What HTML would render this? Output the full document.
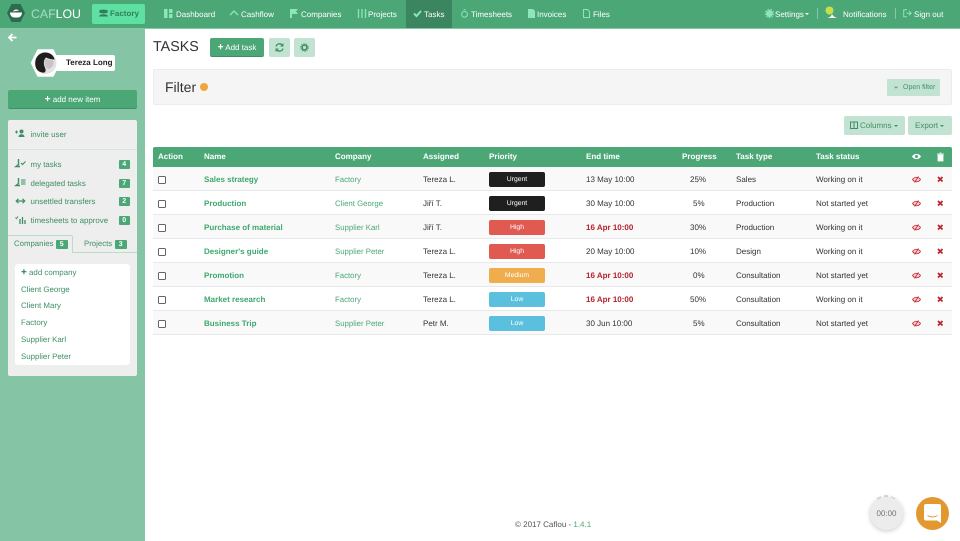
<!DOCTYPE html>
<html><head><meta charset="utf-8"><style>
html,body{margin:0;padding:0;width:960px;height:541px;overflow:hidden;background:#fff;font-family:"Liberation Sans",sans-serif;color:#333;text-rendering:geometricPrecision}
.a,.a *{box-sizing:border-box}
.a{position:absolute;white-space:nowrap}
svg{position:absolute;overflow:visible}
.n{color:#fff;font-size:8px;top:9px;line-height:11px}
.s{color:#3f8f66;font-size:7.9px;line-height:12px;left:30.500px;margin-top:1px}
.b{left:118.500px;width:11.500px;height:9.500px;margin-top:.7px;background:#4ca777;color:#fff;font-size:7px;font-weight:bold;text-align:center;line-height:9.500px;border-radius:1px}
.l{left:21px;color:#3f8f66;font-size:7.900px;line-height:12px}
.h{top:151px;color:#fff;font-size:8px;font-weight:bold;line-height:11px}
.r{left:153px;width:799px;height:24px;border-bottom:1px solid #e8e8e8}
.t{font-size:8px;line-height:12px;color:#333;margin-top:1px}
.g{color:#4ca777;font-size:7.800px}
.nm{font-weight:bold;color:#3fa86f;left:204px}
.cb{left:158px;width:7.500px;height:7.500px;border:1px solid #666;border-radius:1.500px;background:#fff}
.p{left:489px;width:56px;height:14.500px;border-radius:2px;color:#fff;font-size:6.800px;text-align:center;line-height:15.500px}
.red{color:#b3232b;font-weight:bold}
</style></head><body>
<!-- NAV -->
<div class="a" style="left:0;top:0;width:960px;height:29px;background:#4ca777;border-bottom:1px solid #85c9a6"></div>
<svg style="left:7px;top:4px" width="18" height="18" viewBox="0 0 18 18"><polygon points="4.500,0 13.500,0 18,9 13.500,18 4.500,18 0,9" fill="#2f6a4e"/><path d="M3 8.500h12c0 3.200-2.200 5-4 5H7c-1.800 0-4-1.800-4-5z" fill="#fff"/><path d="M6 7.500c1-2.500 4.500-2.500 6-1z" fill="#fff"/></svg>
<div class="a" style="left:31px;top:6px;font-size:12.300px;line-height:16px;color:#a5dcc0">CAF<span style="color:#fff">LOU</span></div>
<div class="a" style="left:92px;top:4px;width:53px;height:20px;background:#5fe0a3;border-radius:2px"></div>
<svg style="left:99px;top:9px" width="9" height="8"><circle cx="2" cy="2.500" r="1.700" fill="#2f7f58"/><circle cx="7" cy="2.500" r="1.700" fill="#2f7f58"/><circle cx="4.500" cy="2.500" r="2" fill="#2f7f58"/><path d="M0 7.500c0-3 9-3 9 0z" fill="#2f7f58"/></svg>
<div class="a" style="left:110px;top:8px;font-size:8px;font-weight:bold;color:#2f7f58;line-height:12px">Factory</div>
<div class="a" style="left:406px;top:0;width:46px;height:28px;background:#3b8561"></div>

<svg style="left:164px;top:9px" width="9" height="9"><rect width="3.500" height="9" fill="#8ee6b8"/><rect x="5" width="3.500" height="4" fill="#8ee6b8"/><rect x="5" y="5" width="3.500" height="4" fill="#8ee6b8"/></svg>
<div class="a n" style="left:176px">Dashboard</div>
<svg style="left:230px;top:10px" width="9" height="6"><path d="M0 5L4 1l4 4" fill="none" stroke="#8ee6b8" stroke-width="1.300"/></svg>
<div class="a n" style="left:241px">Cashflow</div>
<svg style="left:290px;top:9px" width="8" height="9"><path d="M0 0h8L6 2.500 8 5H2v4H0z" fill="#8ee6b8"/></svg>
<div class="a n" style="left:301px">Companies</div>
<svg style="left:358px;top:9px" width="8" height="9"><path d="M.5 0v9M4 0v9M7.500 0v9" stroke="#8ee6b8" stroke-width="1.300"/></svg>
<div class="a n" style="left:368px">Projects</div>
<svg style="left:413px;top:10px" width="9" height="7"><path d="M1 3.500L3.500 6 8 1" fill="none" stroke="#8ee6b8" stroke-width="2"/></svg>
<div class="a n" style="left:424px">Tasks</div>
<svg style="left:461px;top:9px" width="7" height="9"><circle cx="3.500" cy="5.300" r="2.900" fill="none" stroke="#8ee6b8"/><path d="M2.500.7h2" stroke="#8ee6b8"/></svg>
<div class="a n" style="left:471px">Timesheets</div>
<svg style="left:528px;top:9px" width="7" height="9"><path d="M0 0h5l2 2v7H0z" fill="#8ee6b8"/></svg>
<div class="a n" style="left:537px">Invoices</div>
<svg style="left:583px;top:9px" width="7" height="9"><path d="M.5.500h4l2 2v6h-6z" fill="none" stroke="#8ee6b8"/></svg>
<div class="a n" style="left:593px">Files</div>

<svg style="left:765px;top:9px" width="9" height="9"><circle cx="4.500" cy="4.500" r="3.500" fill="#8ee6b8"/><circle cx="4.500" cy="4.500" r="4.300" fill="none" stroke="#8ee6b8" stroke-dasharray="1.500 1.500"/></svg>
<div class="a n" style="left:775px">Settings</div>
<div class="a" style="left:805px;top:13px;border:2px solid transparent;border-top-color:#fff"></div>
<div class="a" style="left:817px;top:8px;width:1px;height:11px;background:#7fcba3"></div>
<svg style="left:825px;top:6px" width="14" height="13"><path d="M1 12c3 0 5-1 6-4 1 2 3 4 6 4z" fill="#fff"/><circle cx="4.500" cy="4.500" r="4" fill="#c5e04a"/></svg>
<div class="a n" style="left:843px">Notifications</div>
<div class="a" style="left:895px;top:8px;width:1px;height:11px;background:#7fcba3"></div>
<svg style="left:903px;top:9px" width="9" height="9"><path d="M4 .7H.7v7H4M3.500 4.200H8M6 2l2.200 2.200L6 6.400" fill="none" stroke="#8ee6b8"/></svg>
<div class="a n" style="left:914px">Sign out</div>

<!-- SIDEBAR -->
<div class="a" style="left:0;top:29px;width:145px;height:512px;background:#85c4a5"></div>
<svg style="left:8px;top:33px" width="9" height="9"><path d="M4.500 1L1 4.500 4.500 8M1.500 4.500H8.500" fill="none" stroke="#fff" stroke-width="1.800"/></svg>
<div class="a" style="left:55px;top:55px;width:60px;height:16px;background:#fff;border-radius:2px;font-size:8px;font-weight:bold;line-height:16px;padding-left:11px;color:#222">Tereza Long</div>
<svg style="left:31px;top:49px" width="29" height="28"><polygon points="7,1 22,1 28.500,14 22,27 7,27 .5,14" fill="#fff" stroke="#fff" stroke-width="1.500" stroke-linejoin="round"/><circle cx="14.500" cy="14" r="11" fill="#e4e2e2"/><path d="M4.500 17C3 8 9 3.500 14 3.500c5 0 9 3 9.500 7-2.500 0-6-.7-8.500-2-2.500 2-2.500 6-1.500 9 1 2.500 2 4.500 0 6-3 .500-8-1-9-6.500z" fill="#1e1e1e"/><path d="M14 9.500c3 1 6.500 1.500 8.500 2 1 4-2 8.500-5.500 8.500-3-2-4.500-6.500-3-10.500z" fill="#c9c4c4"/></svg>
<div class="a" style="left:8px;top:90px;width:129px;height:19px;background:#4ca777;border-bottom:1px solid #3f8f66;border-radius:2px;color:#fff;font-size:8px;line-height:19px;text-align:center"><b style="font-size:10px">+</b> add new item</div>

<div class="a" style="left:8px;top:120px;width:129px;height:256px;background:#eeeeee;border-radius:2px"></div>
<div class="a" style="left:8px;top:149px;width:129px;height:1px;background:#d2e8dc"></div>
<svg style="left:15px;top:129px" width="11" height="9"><path d="M0 3h3M1.500 1.500v3" stroke="#3f8f66"/><circle cx="6.500" cy="2.500" r="2" fill="#3f8f66"/><path d="M3.500 8c0-2 1.500-2.700 3-2.700s3 .7 3 2.700z" fill="#3f8f66"/></svg>
<div class="a s" style="top:128px">invite user</div>
<svg style="left:15px;top:159px" width="11" height="9"><path d="M3.500 0v5.500L1 7.500h4" fill="none" stroke="#3f8f66" stroke-width="1.400"/><path d="M6 4l1.500 1.500L10.500 2.500" fill="none" stroke="#3f8f66" stroke-width="1.200"/></svg>
<div class="a s" style="top:158px">my tasks</div>
<div class="a b" style="top:159px">4</div>
<svg style="left:15px;top:178px" width="11" height="9"><path d="M3.500 0v5.500L1 7.500h4" fill="none" stroke="#3f8f66" stroke-width="1.400"/><path d="M6 2h4.500M6 4h4.500M6 6h4.500" stroke="#3f8f66" stroke-width=".9"/></svg>
<div class="a s" style="top:177px">delegated tasks</div>
<div class="a b" style="top:178px">7</div>
<svg style="left:15px;top:197px" width="11" height="8"><path d="M1.500 4h8M3.500 1.800L1.200 4l2.300 2.200M7.500 1.800L9.800 4 7.500 6.200" fill="none" stroke="#3f8f66" stroke-width="1.200"/></svg>
<div class="a s" style="top:195px">unsettled transfers</div>
<div class="a b" style="top:196px">2</div>
<svg style="left:15px;top:215px" width="11" height="9"><path d="M5 4v5M7.500 2v7M10 5v4" stroke="#3f8f66" stroke-width="1.300"/><path d="M.5 2.500l1 1L3 1.500" fill="none" stroke="#3f8f66"/></svg>
<div class="a s" style="top:214px">timesheets to approve</div>
<div class="a b" style="top:215px">0</div>

<div class="a" style="left:8px;top:235px;width:65px;height:18px;background:#eeeeee;border:1px solid #b9ddca;border-bottom:0;border-left:0;border-radius:0 2px 0 0"></div>
<div class="a" style="left:73px;top:252px;width:64px;height:1px;background:#b9ddca"></div>
<div class="a" style="left:14px;top:238px;font-size:7.800px;line-height:12px;color:#3f8f66">Companies</div>
<div class="a b" style="left:56px;top:239px">5</div>
<div class="a" style="left:84px;top:238px;font-size:7.800px;line-height:12px;color:#3f8f66">Projects</div>
<div class="a b" style="left:115px;top:239px">3</div>

<div class="a" style="left:15px;top:264px;width:115px;height:101px;background:#fff;border-radius:3px"></div>
<div class="a l" style="top:266.500px"><b style="font-size:10px;color:#2f7f58">+</b> add company</div>
<div class="a l" style="top:283.500px">Client George</div>
<div class="a l" style="top:300px">Client Mary</div>
<div class="a l" style="top:317px">Factory</div>
<div class="a l" style="top:334px">Supplier Karl</div>
<div class="a l" style="top:350.500px">Supplier Peter</div>

<!-- HEADER -->
<div class="a" style="left:153px;top:38px;font-size:14.300px;line-height:18px;color:#333">TASKS</div>
<div class="a" style="left:210px;top:38px;width:54px;height:19px;background:#4ca777;border-bottom:1px solid #3f8f66;border-radius:2px;color:#fff;font-size:8px;line-height:19px;text-align:center"><b style="font-size:10px">+</b> Add task</div>
<div class="a" style="left:269px;top:38px;width:21px;height:19px;background:#c3e3d2;border-radius:2px"></div>
<svg style="left:275px;top:43px" width="9" height="9"><path d="M1 3.500A3.600 3.600 0 0 1 7.500 2.500M8 5.500A3.600 3.600 0 0 1 1.500 6.500" fill="none" stroke="#3f8f66" stroke-width="1.300"/><path d="M8.500 0v3.500H5zM.5 9V5.500H4z" fill="#3f8f66"/></svg>
<div class="a" style="left:294px;top:38px;width:21px;height:19px;background:#c3e3d2;border-radius:2px"></div>
<svg style="left:300px;top:43px" width="9" height="9"><circle cx="4.500" cy="4.500" r="2.400" fill="none" stroke="#3f8f66" stroke-width="1.600"/><circle cx="4.500" cy="4.500" r="3.800" fill="none" stroke="#3f8f66" stroke-dasharray="1.200 1.200"/></svg>

<!-- FILTER -->
<div class="a" style="left:153px;top:69px;width:799px;height:36px;background:#f5f5f5;border:1px solid #ececec;border-radius:2px"></div>
<div class="a" style="left:165px;top:79px;font-size:14px;line-height:16px;color:#333">Filter</div>
<div class="a" style="left:200px;top:83px;width:8px;height:8px;border-radius:50%;background:#f0a63d"></div>
<div class="a" style="left:887px;top:79px;width:53px;height:17px;background:#c3e3d2;border-radius:1px"></div>
<svg style="left:894px;top:86px" width="4" height="3"><path d="M.5.500L2 2 3.500.5" fill="none" stroke="#3f8f66" stroke-width=".8"/></svg>
<div class="a" style="left:903px;top:82px;font-size:7px;line-height:11px;color:#3f8f66">Open filter</div>

<div class="a" style="left:844px;top:116px;width:61px;height:19px;background:#c3e3d2;border-radius:2px;font-size:8px;line-height:19px;color:#3f8f66;padding-left:16px">Columns</div>
<svg style="left:850px;top:121px" width="9" height="9"><rect x=".5" y="1" width="7" height="6.500" fill="none" stroke="#3f8f66"/><path d="M4 1v6.500" stroke="#3f8f66"/></svg>
<div class="a" style="left:894px;top:125px;border:2px solid transparent;border-top-color:#3f8f66"></div>
<div class="a" style="left:908px;top:116px;width:44px;height:19px;background:#c3e3d2;border-radius:2px;font-size:8px;line-height:19px;color:#3f8f66;padding-left:7px">Export</div>
<div class="a" style="left:940px;top:125px;border:2px solid transparent;border-top-color:#3f8f66"></div>

<!-- TABLE HEADER -->
<div class="a" style="left:153px;top:147px;width:799px;height:20px;background:#4ca777;border-radius:2px 2px 0 0"></div>
<div class="a h" style="left:158px">Action</div>
<div class="a h" style="left:204px">Name</div>
<div class="a h" style="left:335px">Company</div>
<div class="a h" style="left:423px">Assigned</div>
<div class="a h" style="left:489px">Priority</div>
<div class="a h" style="left:586px">End time</div>
<div class="a h" style="left:682px">Progress</div>
<div class="a h" style="left:736px">Task type</div>
<div class="a h" style="left:816px">Task status</div>
<svg style="left:912px;top:153px" width="9" height="7"><path d="M0 3.500C2 0 7 0 9 3.500 7 7 2 7 0 3.500z" fill="#fff"/><circle cx="4.500" cy="3.500" r="1.500" fill="#4ca777"/></svg>
<svg style="left:937px;top:153px" width="7" height="8"><path d="M0 1h7M1 2h5v6H1zM2.500 0h2" stroke="#fff" fill="#fff" stroke-width=".8"/></svg>

<!-- ROW BACKGROUNDS -->
<div class="a r" style="top:167px;background:#f9f9f9"></div>
<div class="a r" style="top:191px"></div>
<div class="a r" style="top:215px;background:#f9f9f9"></div>
<div class="a r" style="top:239px"></div>
<div class="a r" style="top:263px;background:#f9f9f9"></div>
<div class="a r" style="top:287px"></div>
<div class="a r" style="top:311px;background:#f9f9f9"></div>

<!-- Row 1 -->
<div class="a cb" style="top:176px"></div><div class="a t nm" style="top:173px">Sales strategy</div><div class="a t g" style="left:335px;top:173px">Factory</div><div class="a t" style="left:423px;top:173px">Tereza L.</div><div class="a p" style="top:172px;background:#1f1f1f">Urgent</div><div class="a t" style="left:586px;top:173px">13 May 10:00</div><div class="a t" style="left:690px;top:173px">25%</div><div class="a t" style="left:736px;top:173px">Sales</div><div class="a t" style="left:816px;top:173px">Working on it</div>
<!-- Row 2 -->
<div class="a cb" style="top:200px"></div><div class="a t nm" style="top:197px">Production</div><div class="a t g" style="left:335px;top:197px">Client George</div><div class="a t" style="left:423px;top:197px">Jiří T.</div><div class="a p" style="top:196px;background:#1f1f1f">Urgent</div><div class="a t" style="left:586px;top:197px">30 May 10:00</div><div class="a t" style="left:693px;top:197px">5%</div><div class="a t" style="left:736px;top:197px">Production</div><div class="a t" style="left:816px;top:197px">Not started yet</div>
<!-- Row 3 -->
<div class="a cb" style="top:224px"></div><div class="a t nm" style="top:221px">Purchase of material</div><div class="a t g" style="left:335px;top:221px">Supplier Karl</div><div class="a t" style="left:423px;top:221px">Jiří T.</div><div class="a p" style="top:220px;background:#e05a52">High</div><div class="a t red" style="left:586px;top:221px">16 Apr 10:00</div><div class="a t" style="left:690px;top:221px">30%</div><div class="a t" style="left:736px;top:221px">Production</div><div class="a t" style="left:816px;top:221px">Working on it</div>
<!-- Row 4 -->
<div class="a cb" style="top:248px"></div><div class="a t nm" style="top:245px">Designer's guide</div><div class="a t g" style="left:335px;top:245px">Supplier Peter</div><div class="a t" style="left:423px;top:245px">Tereza L.</div><div class="a p" style="top:244px;background:#e05a52">High</div><div class="a t" style="left:586px;top:245px">20 May 10:00</div><div class="a t" style="left:690px;top:245px">10%</div><div class="a t" style="left:736px;top:245px">Design</div><div class="a t" style="left:816px;top:245px">Working on it</div>
<!-- Row 5 -->
<div class="a cb" style="top:272px"></div><div class="a t nm" style="top:269px">Promotion</div><div class="a t g" style="left:335px;top:269px">Factory</div><div class="a t" style="left:423px;top:269px">Tereza L.</div><div class="a p" style="top:268px;background:#f0ad4e">Medium</div><div class="a t red" style="left:586px;top:269px">16 Apr 10:00</div><div class="a t" style="left:693px;top:269px">0%</div><div class="a t" style="left:736px;top:269px">Consultation</div><div class="a t" style="left:816px;top:269px">Not started yet</div>
<!-- Row 6 -->
<div class="a cb" style="top:296px"></div><div class="a t nm" style="top:293px">Market research</div><div class="a t g" style="left:335px;top:293px">Factory</div><div class="a t" style="left:423px;top:293px">Tereza L.</div><div class="a p" style="top:292px;background:#5bc0de">Low</div><div class="a t red" style="left:586px;top:293px">16 Apr 10:00</div><div class="a t" style="left:690px;top:293px">50%</div><div class="a t" style="left:736px;top:293px">Consultation</div><div class="a t" style="left:816px;top:293px">Working on it</div>
<!-- Row 7 -->
<div class="a cb" style="top:320px"></div><div class="a t nm" style="top:317px">Business Trip</div><div class="a t g" style="left:335px;top:317px">Supplier Peter</div><div class="a t" style="left:423px;top:317px">Petr M.</div><div class="a p" style="top:316px;background:#5bc0de">Low</div><div class="a t" style="left:586px;top:317px">30 Jun 10:00</div><div class="a t" style="left:693px;top:317px">5%</div><div class="a t" style="left:736px;top:317px">Consultation</div><div class="a t" style="left:816px;top:317px">Not started yet</div>

<!-- Row icons -->
<svg style="left:912px;top:176px" width="9" height="151" viewBox="0 0 9 151" fill="#f4d2d3" stroke="#c0242c" stroke-width=".8">
<path d="M.5 3.500C2.500.5 6.500.5 8.500 3.500 6.500 6.500 2.500 6.500.5 3.500zM6.500.5L2.500 6.500"/>
<path transform="translate(0,24)" d="M.5 3.500C2.500.5 6.500.5 8.500 3.500 6.500 6.500 2.500 6.500.5 3.500zM6.500.5L2.500 6.500"/>
<path transform="translate(0,48)" d="M.5 3.500C2.500.5 6.500.5 8.500 3.500 6.500 6.500 2.500 6.500.5 3.500zM6.500.5L2.500 6.500"/>
<path transform="translate(0,72)" d="M.5 3.500C2.500.5 6.500.5 8.500 3.500 6.500 6.500 2.500 6.500.5 3.500zM6.500.5L2.500 6.500"/>
<path transform="translate(0,96)" d="M.5 3.500C2.500.5 6.500.5 8.500 3.500 6.500 6.500 2.500 6.500.5 3.500zM6.500.5L2.500 6.500"/>
<path transform="translate(0,120)" d="M.5 3.500C2.500.5 6.500.5 8.500 3.500 6.500 6.500 2.500 6.500.5 3.500zM6.500.5L2.500 6.500"/>
<path transform="translate(0,144)" d="M.5 3.500C2.500.5 6.500.5 8.500 3.500 6.500 6.500 2.500 6.500.5 3.500zM6.500.5L2.500 6.500"/>
</svg>
<svg style="left:937px;top:176px" width="7" height="151" viewBox="0 0 7 151" stroke="#c0242c" stroke-width="1.800" fill="none">
<path d="M1 1l4.500 4.500M5.500 1L1 5.500M1 25l4.500 4.500M5.500 25L1 29.500M1 49l4.500 4.500M5.500 49L1 53.500M1 73l4.500 4.500M5.500 73L1 77.500M1 97l4.500 4.500M5.500 97L1 101.500M1 121l4.500 4.500M5.500 121L1 125.500M1 145l4.500 4.500M5.500 145L1 149.500"/>
</svg>

<!-- FOOTER -->
<div class="a" style="left:515px;top:519px;font-size:8px;line-height:11px;color:#555">© 2017 Caflou - <span style="color:#4ca777">1.4.1</span></div>

<!-- TIMER -->
<svg style="left:868px;top:493px" width="36" height="40"><path d="M9 6l4-2M27 6l-4-2M16 3h4" stroke="#ddd" stroke-width="2"/></svg>
<div class="a" style="left:870px;top:497px;width:33px;height:33px;border-radius:50%;background:#ececec;box-shadow:0 1px 5px rgba(0,0,0,.22);color:#777;font-size:8px;line-height:33px;text-align:center">00:00</div>
<div class="a" style="left:916px;top:497px;width:33px;height:33px;border-radius:50%;background:#e2982f"></div>
<svg style="left:924px;top:504px" width="17" height="19"><path d="M2 0h13a2 2 0 0 1 2 2v17l-4-2.500H2a2 2 0 0 1-2-2V2a2 2 0 0 1 2-2z" fill="#fff"/><path d="M3.500 11.500c3 2 7 2 10 0" fill="none" stroke="#e2982f"/></svg>
</body></html>
